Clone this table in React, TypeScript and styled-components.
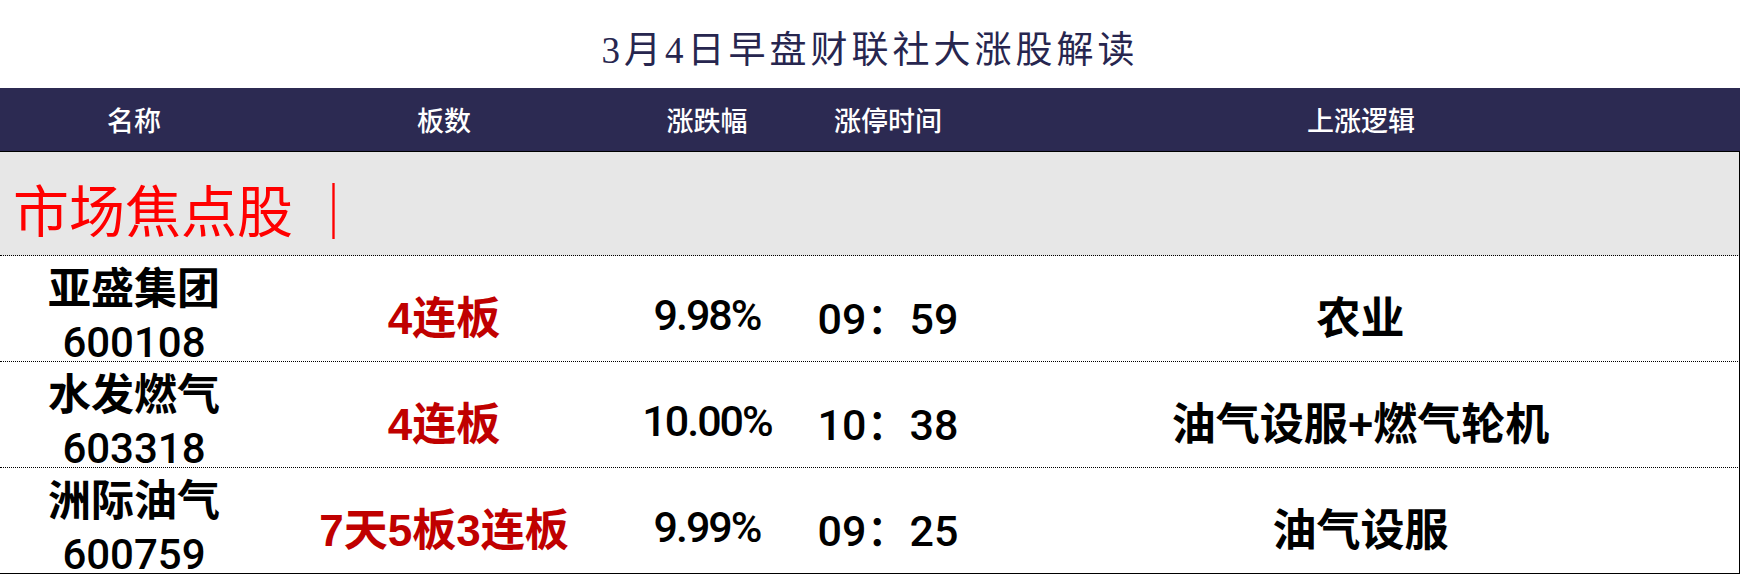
import React from "react";
import styled, {createGlobalStyle} from "styled-components";

const GlobalStyle = createGlobalStyle`
  body {
    margin: 0;
    background: #fff;
  }
`;

const CJK = `"Liberation Sans", "Noto Sans CJK SC", sans-serif`;
const NUM = `Roboto, "Noto Sans CJK SC", sans-serif`;
const COLUMNS = "268px 352px 174px 188px 1fr";

const stocks = [
  {name: "亚盛集团", code: "600108", board: "4连板", change: "9.98%", time: "09：59", reason: "农业"},
  {name: "水发燃气", code: "603318", board: "4连板", change: "10.00%", time: "10：38", reason: "油气设服+燃气轮机"},
  {name: "洲际油气", code: "600759", board: "7天5板3连板", change: "9.99%", time: "09：25", reason: "油气设服"},
];

const headers = ["名称", "板数", "涨跌幅", "涨停时间", "上涨逻辑"];

const App: React.FC = () => {
  return (
    <Page>
      <GlobalStyle />
      <Title>3月4日早盘财联社大涨股解读</Title>
      <HeaderRow>
        {headers.map((h) => (
          <HeaderCell key={h}>{h}</HeaderCell>
        ))}
      </HeaderRow>
      <SectionRow>
        <SectionLabel>市场焦点股 ｜</SectionLabel>
      </SectionRow>
      {stocks.map((s, index) => (
        <DataRow key={s.code} last={index === stocks.length - 1}>
          <NameCell>
            <StockName>{s.name}</StockName>
            <StockCode>{s.code}</StockCode>
          </NameCell>
          <Cell>
            <Board>{s.board}</Board>
          </Cell>
          <Cell>
            <Figure tight>{s.change}</Figure>
          </Cell>
          <Cell>
            <Figure>{s.time}</Figure>
          </Cell>
          <Cell>
            <Reason>{s.reason}</Reason>
          </Cell>
        </DataRow>
      ))}
    </Page>
  );
};

const Page = styled.div`
  width: 1740px;
  display: flex;
  flex-direction: column;
`;

const Title = styled.div`
  height: 88px;
  box-sizing: border-box;
  padding-top: 6px;
  display: flex;
  align-items: center;
  justify-content: center;
  font-family: "Liberation Serif", "Noto Sans CJK SC", serif;
  font-size: 37px;
  letter-spacing: 4px;
  color: #27264f;
`;

const HeaderRow = styled.div`
  display: grid;
  grid-template-columns: ${COLUMNS};
  height: 63px;
  background: #2c2a52;
  border-bottom: 1px solid #000;
`;

const HeaderCell = styled.div`
  display: flex;
  align-items: center;
  justify-content: center;
  font-family: ${CJK};
  font-size: 27px;
  font-weight: 500;
  color: #fff;
`;

const SectionRow = styled.div`
  height: 104px;
  box-sizing: border-box;
  padding: 8px 0 0 13px;
  display: flex;
  align-items: center;
  background: #e7e7e7;
  border-right: 1px solid #000;
  border-bottom: 1px dotted #000;
`;

const SectionLabel = styled.span`
  font-family: "Noto Sans CJK SC", sans-serif;
  font-size: 56px;
  color: #ff0000;
  white-space: pre;
`;

const DataRow = styled("div")<{last?: boolean}>`
  display: grid;
  grid-template-columns: ${COLUMNS};
  height: 105px;
  border-right: 1px solid #000;
  border-bottom: 1px ${(props) => (props.last ? "solid" : "dotted")} #000;
`;

const Cell = styled.div`
  display: flex;
  align-items: center;
  justify-content: center;
  padding-top: 4px;
`;

const NameCell = styled.div`
  display: flex;
  flex-direction: column;
  align-items: center;
  justify-content: center;
  padding-top: 6px;
`;

const StockName = styled.span`
  font-family: ${CJK};
  font-size: 43px;
  font-weight: 700;
  line-height: 54px;
  color: #000;
`;

const StockCode = styled.span`
  font-family: ${NUM};
  font-size: 42px;
  font-weight: 500;
  line-height: 54px;
  color: #000;
`;

const Board = styled.span`
  font-family: ${CJK};
  font-size: 44px;
  font-weight: 700;
  color: #c00000;
`;

const Figure = styled("span")<{tight?: boolean}>`
  font-family: ${NUM};
  font-size: 43px;
  font-weight: 500;
  letter-spacing: ${(props) => (props.tight ? "-2px" : "0")};
  color: #000;
`;

const Reason = styled.span`
  font-family: ${CJK};
  font-size: 44px;
  font-weight: 700;
  color: #000;
`;

export default App;
